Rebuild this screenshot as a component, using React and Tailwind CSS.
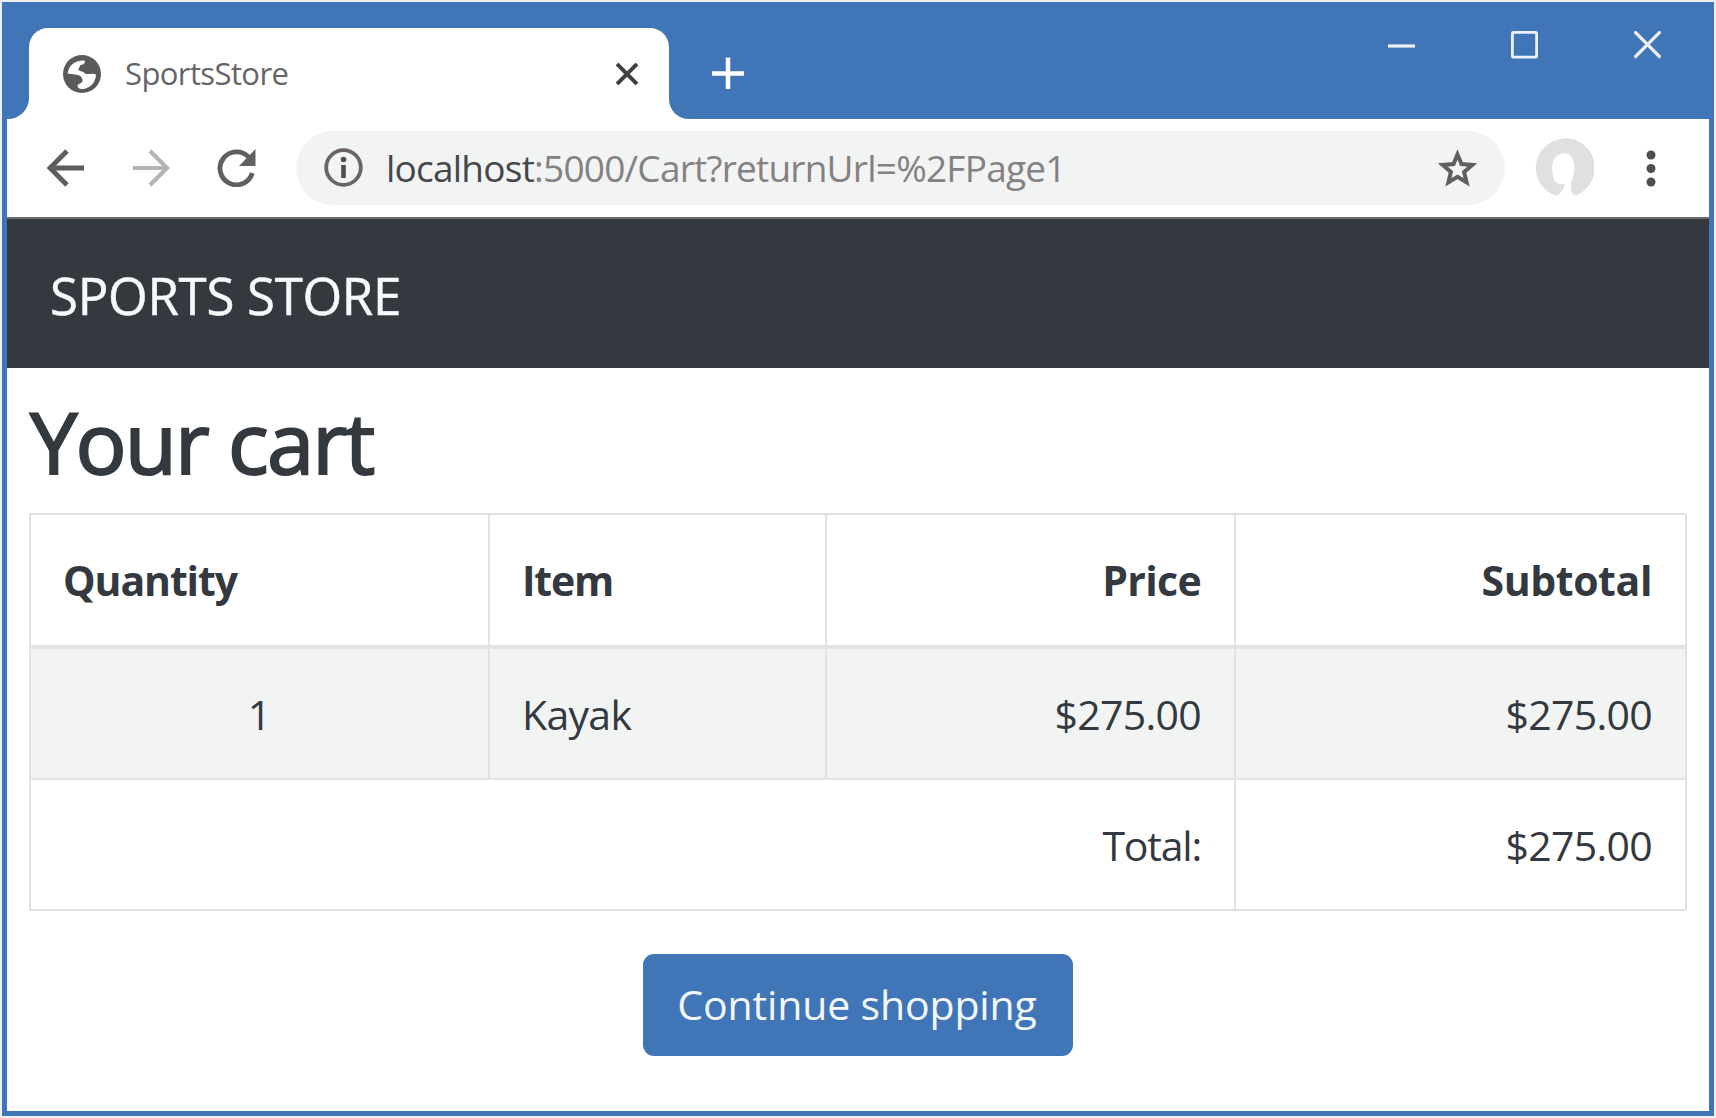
const BackIcon = () => (
  <svg className="ml-[39px] h-[38px] w-[38px] shrink-0" viewBox="0 0 38 38" fill="none" stroke="#5f5d60" strokeWidth="4.8">
    <path d="M38 19H4M21 2L4 19l17 17" />
  </svg>
);

const ForwardIcon = () => (
  <svg className="ml-[49px] h-[38px] w-[38px] shrink-0" viewBox="0 0 38 38" fill="none" stroke="#b3b3b5" strokeWidth="4.2">
    <path d="M0 19h34M17 2l17 17-17 17" />
  </svg>
);

const ReloadIcon = () => (
  <svg className="ml-[46px] h-[38px] w-[39px] shrink-0" viewBox="0 0 39 38">
    <path d="M35.300 24A16.500 16.500 0 1 1 31.500 8" fill="none" stroke="#625f61" strokeWidth="4.8" />
    <path d="M38.500 0v17H22z" fill="#625f61" />
  </svg>
);

const GlobeIcon = () => (
  <svg className="h-[38px] w-[38px] shrink-0" viewBox="0 0 38 38">
    <circle cx="19" cy="19" r="19" fill="#5c595c" />
    <path
      d="M4.500 18.500C6 10 12 5 21.500 5.500C22.500 8 21 9.500 17.500 10C16 11.500 17 13 15 14.500C17 17 21 16 22 18.500C25 20 29 17.500 33 19.500C33 27 27 33.500 20 34C16.500 34.500 14.500 33 14.500 30.500C16 28 20 28.500 19.500 25C19 20.500 15 20 12 19.500z"
      fill="#fff"
    />
  </svg>
);

const InfoIcon = () => (
  <svg className="ml-7 h-[39px] w-[39px] shrink-0" viewBox="0 0 39 39">
    <circle cx="19.500" cy="19.500" r="17.300" fill="none" stroke="#6a6565" strokeWidth="3.800" />
    <circle cx="19.500" cy="11.500" r="2.800" fill="#514e51" />
    <path d="M19.500 17v13" stroke="#514e51" strokeWidth="4.600" />
  </svg>
);

const StarIcon = () => (
  <svg className="mr-7 h-[38px] w-[40px] shrink-0" viewBox="0 0 40 38">
    <path
      d="M20.500 5.500l4 9.500 10.800.9-8.200 7 2.500 10.400-9.100-5.500-9.100 5.500 2.500-10.400-8.200-7 10.800-.9z"
      fill="none"
      stroke="#625e60"
      strokeWidth="4"
    />
  </svg>
);

const AvatarIcon = () => (
  <svg className="ml-[29px] h-[60px] w-[60px] shrink-0" viewBox="0 0 60 60">
    <path
      d="M21 57.500A29.500 29.500 0 1 1 45 56C42 58.500 38 57.500 37.500 53L37 45C42 34 42 16 31 15.500C20 15 17 25 18.500 35C19.500 43 22 47 31 46C30 51 26 57.500 21 57.500z"
      fill="#dfe0e2"
    />
  </svg>
);

const MenuIcon = () => (
  <svg className="ml-[52px] h-[38px] w-[10px] shrink-0" viewBox="0 0 10 38" fill="#504e52">
    <circle cx="5" cy="6" r="4.500" />
    <circle cx="5" cy="19.500" r="4.500" />
    <circle cx="5" cy="33" r="4.500" />
  </svg>
);

const cell = "border-2 border-[#e0e2e3] pt-[2px] pr-[33px] pl-8";

export default function App() {
  return (
    <div className="h-[1118px] w-[1716px] overflow-hidden bg-[#eef1f4] p-[2px] font-['Open_Sans','Noto_Sans',sans-serif] text-[#33393f]">
      <div className="flex h-[1114px] w-[1712px] flex-col bg-[#4076b8] px-[5px] pb-[5px]">
        <header className="flex h-[117px] shrink-0 pt-[26px]">
          <div className="relative ml-[22px] flex h-[91px] w-[640px] items-center rounded-t-[19px] bg-white pl-[34px]">
            <span className="absolute bottom-0 left-[-22px] h-[22px] w-[22px] overflow-hidden bg-white">
              <span className="block h-full w-full rounded-br-[21px] bg-[#4076b8]" />
            </span>
            <span className="absolute right-[-20px] bottom-0 h-5 w-5 bg-white">
              <span className="block h-full w-full rounded-bl-[20px] bg-[#4076b8]" />
            </span>
            <GlobeIcon />
            <span className="ml-6 text-[31px] tracking-[-0.6px] whitespace-nowrap text-[#656468]">SportsStore</span>
            <svg className="mr-[31px] ml-auto h-[22px] w-[22px]" viewBox="0 0 22 22" stroke="#403f43" strokeWidth="4">
              <path d="M1 1l20 20M21 1L1 21" />
            </svg>
          </div>
          <svg className="mt-[29px] ml-[43px] h-8 w-8" viewBox="0 0 32 32" stroke="#fff" strokeWidth="4.500">
            <path d="M0 16.500h32M16 .5v32" />
          </svg>
          <div className="mr-12 ml-auto flex gap-24 pt-[3px]">
            <svg className="h-7 w-[27px]" viewBox="0 0 27 28" stroke="#edf1f6" strokeWidth="3.200">
              <path d="M0 15h27" />
            </svg>
            <svg className="h-7 w-[27px]" viewBox="0 0 27 28" fill="none" stroke="#edf1f6" strokeWidth="2.800">
              <rect x="1.400" y="1.400" width="24.200" height="24.800" rx="1" />
            </svg>
            <svg className="h-7 w-[27px]" viewBox="0 0 27 28" stroke="#edf1f6" strokeWidth="3.200">
              <path d="M.5.5l26 26M26.500.5l-26 26" />
            </svg>
          </div>
        </header>

        <div className="flex h-[100px] shrink-0 items-center border-b-2 border-[#6c6a6d] bg-white">
          <BackIcon />
          <ForwardIcon />
          <ReloadIcon />
          <div className="mt-[-1px] ml-10 flex h-[74px] w-[1209px] shrink-0 items-center rounded-full bg-[#f2f4f4]">
            <InfoIcon />
            <span className="ml-[23px] text-[37px] tracking-[-0.77px] whitespace-nowrap text-[#858182]">
              <span className="text-[#45474b]">localhost</span>:5000/Cart?returnUrl=%2FPage1
            </span>
            <span className="grow" />
            <StarIcon />
          </div>
          <AvatarIcon />
          <MenuIcon />
        </div>

        <div className="flex h-[149px] shrink-0 items-center bg-[#33393f] pt-[3px] pl-[43px]">
          <span className="text-[51px] tracking-[-0.3px] whitespace-nowrap text-[#f8f9fa] [-webkit-text-stroke:0.5px_#f8f9fa]">SPORTS STORE</span>
        </div>

        <main className="flex grow flex-col bg-white px-[22px]">
          <h1 className="mt-[19px] ml-[1px] h-[126px] text-[85px] leading-[108px] font-medium tracking-[-1.9px] whitespace-nowrap [-webkit-text-stroke:2px_#33393f]">
            Your cart
          </h1>
          <table className="w-[1656px] table-fixed border-collapse text-[41px]">
            <colgroup>
              <col className="w-[459px]" />
              <col className="w-[337px]" />
              <col className="w-[409px]" />
              <col className="w-[451px]" />
            </colgroup>
            <thead>
              <tr className="h-[133px] font-bold">
                <th className={`${cell} border-b-4 text-left tracking-[-1.1px]`}>Quantity</th>
                <th className={`${cell} border-b-4 text-left tracking-[-1.2px]`}>Item</th>
                <th className={`${cell} border-b-4 text-right tracking-[-0.7px]`}>Price</th>
                <th className={`${cell} border-b-4 text-right tracking-[-0.4px]`}>Subtotal</th>
              </tr>
            </thead>
            <tbody className="tracking-[-0.7px]">
              <tr className="h-[132px] bg-[#f2f4f4]">
                <td className={`${cell} text-center`}>1</td>
                <td className={`${cell} text-left`}>Kayak</td>
                <td className={`${cell} text-right`}>$275.00</td>
                <td className={`${cell} text-right`}>$275.00</td>
              </tr>
              <tr className="h-[131px]">
                <td colSpan={3} className={`${cell} text-right tracking-[-1.2px]`}>Total:</td>
                <td className={`${cell} text-right`}>$275.00</td>
              </tr>
            </tbody>
          </table>
          <button className="mt-[43px] flex h-[102px] w-[430px] items-center justify-center self-center rounded-[11px] bg-[#4076b8] pr-[2px] text-[41px] tracking-[-0.15px] whitespace-nowrap text-[#f4f7fa]">
            Continue shopping
          </button>
        </main>
      </div>
    </div>
  );
}
